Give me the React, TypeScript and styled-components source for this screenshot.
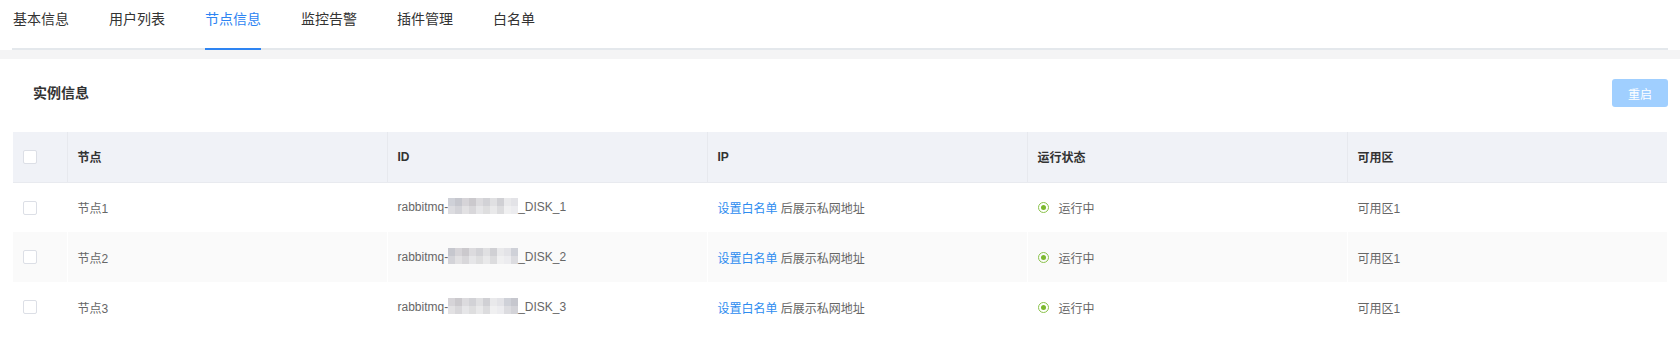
import React from "react";
import styled, { createGlobalStyle } from "styled-components";

const GlobalStyle = createGlobalStyle`
  html, body { margin: 0; padding: 0; background: #ffffff; }
  body {
    font-family: "Liberation Sans", "Noto Sans CJK SC", Arial, sans-serif;
    -webkit-font-smoothing: antialiased;
  }
  * { box-sizing: border-box; }
`;

const Page = styled.div`
  width: 1680px;
  background: #ffffff;
`;

const TabBar = styled.div`
  display: flex;
  margin: 0 12px;
  height: 50px;
  border-bottom: 2px solid #e4e8ec;
  padding-left: 1px;
`;

const Tab = styled.div<{ $active?: boolean }>`
  height: 50px;
  margin-bottom: -2px;
  margin-right: 40px;
  padding-top: 9px;
  font-size: 14px;
  line-height: 20px;
  color: ${(p) => (p.$active ? "#2e84f2" : "#333333")};
  border-bottom: 2px solid ${(p) => (p.$active ? "#2e84f2" : "transparent")};
  cursor: pointer;
  white-space: nowrap;
`;

const Band = styled.div`
  height: 9px;
  background: #f4f4f5;
`;

const Panel = styled.div`
  padding: 20px 12px 0 13px;
`;

const PanelHeader = styled.div`
  display: flex;
  align-items: center;
  justify-content: space-between;
  height: 28px;
  padding-left: 20px;
  margin-bottom: 25px;
`;

const Title = styled.div`
  font-size: 14px;
  font-weight: 700;
  color: #333333;
  line-height: 20px;
`;

const Button = styled.button`
  width: 56px;
  height: 28px;
  border: none;
  border-radius: 3px;
  background: #a0cfff;
  color: #ffffff;
  font-family: inherit;
  font-size: 12px;
  cursor: not-allowed;
`;

const Table = styled.table`
  width: calc(100% - 1px);
  border-collapse: collapse;
  table-layout: fixed;
`;

const HeadCell = styled.th<{ $narrow?: boolean }>`
  width: ${(p) => (p.$narrow ? "54px" : "auto")};
  height: 50px;
  padding: 0 10px;
  text-align: left;
  font-size: 12px;
  font-weight: 700;
  color: #333333;
  background: #f0f2f7;
  border-right: 1px solid #e7e9ee;
  border-bottom: 1px solid #e8eaef;
  &:last-child { border-right: none; }
`;

const Row = styled.tr<{ $striped?: boolean }>`
  background: ${(p) => (p.$striped ? "#fafafa" : "#ffffff")};
`;

const Cell = styled.td`
  height: 50px;
  padding: 0 10px;
  font-size: 12px;
  color: #666666;
  border-right: 1px solid #ffffff;
  white-space: nowrap;
  &:last-child { border-right: none; }
`;

const Checkbox = styled.span`
  display: inline-block;
  width: 14px;
  height: 14px;
  border: 1px solid #dcdfe6;
  border-radius: 2px;
  background: #ffffff;
  vertical-align: middle;
`;

const Link = styled.a`
  color: #2d8cf0;
  text-decoration: none;
  cursor: pointer;
`;

const Status = styled.span`
  display: inline-flex;
  align-items: center;
  gap: 10px;
`;

const Dot = styled.span`
  position: relative;
  display: inline-block;
  width: 11px;
  height: 11px;
  border: 1.5px solid #8bc34a;
  border-radius: 50%;
  &::after {
    content: "";
    position: absolute;
    left: 50%;
    top: 50%;
    width: 5px;
    height: 5px;
    margin: -2.5px 0 0 -2.5px;
    border-radius: 50%;
    background: #7cb82f;
  }
`;

const Mask = styled.svg`
  display: inline-block;
  vertical-align: middle;
  margin-top: -3px;
`;

const mosaic = [
  ["#e3e3e7", "#cfd1d8", "#c6c7ce", "#d6d4d8", "#cbc9cd", "#dcdbde", "#d2d2d6", "#e0e0e2", "#d0d0d4", "#e9e9eb"],
  ["#ececef", "#dcdce0", "#d3d3d8", "#e2e1e3", "#d8d7da", "#e6e6e8", "#dededf", "#e9e9ea", "#dcdcde", "#f0f0f1"],
];

const Redacted: React.FC<{ seed: number }> = ({ seed }) => (
  <Mask width="70" height="16" viewBox="0 0 70 16">
    {mosaic.map((row, r) =>
      row.map((c, i) => (
        <rect
          key={`${r}-${i}`}
          x={i * 7}
          y={r * 8}
          width="7"
          height="8"
          fill={row[(i + seed) % row.length]}
        />
      ))
    )}
  </Mask>
);

const tabs = ["基本信息", "用户列表", "节点信息", "监控告警", "插件管理", "白名单"];

const nodes = [1, 2, 3];

export default function App() {
  return (
    <Page>
      <GlobalStyle />
      <TabBar>
        {tabs.map((t) => (
          <Tab key={t} $active={t === "节点信息"}>
            {t}
          </Tab>
        ))}
      </TabBar>
      <Band />
      <Panel>
        <PanelHeader>
          <Title>实例信息</Title>
          <Button disabled>重启</Button>
        </PanelHeader>
        <Table>
          <thead>
            <tr>
              <HeadCell $narrow>
                <Checkbox />
              </HeadCell>
              <HeadCell>节点</HeadCell>
              <HeadCell>ID</HeadCell>
              <HeadCell>IP</HeadCell>
              <HeadCell>运行状态</HeadCell>
              <HeadCell>可用区</HeadCell>
            </tr>
          </thead>
          <tbody>
            {nodes.map((n) => (
              <Row key={n} $striped={n % 2 === 0}>
                <Cell>
                  <Checkbox />
                </Cell>
                <Cell>节点{n}</Cell>
                <Cell>
                  rabbitmq-
                  <Redacted seed={n} />
                  _DISK_{n}
                </Cell>
                <Cell>
                  <Link>设置白名单</Link> 后展示私网地址
                </Cell>
                <Cell>
                  <Status>
                    <Dot />
                    运行中
                  </Status>
                </Cell>
                <Cell>可用区1</Cell>
              </Row>
            ))}
          </tbody>
        </Table>
      </Panel>
    </Page>
  );
}
